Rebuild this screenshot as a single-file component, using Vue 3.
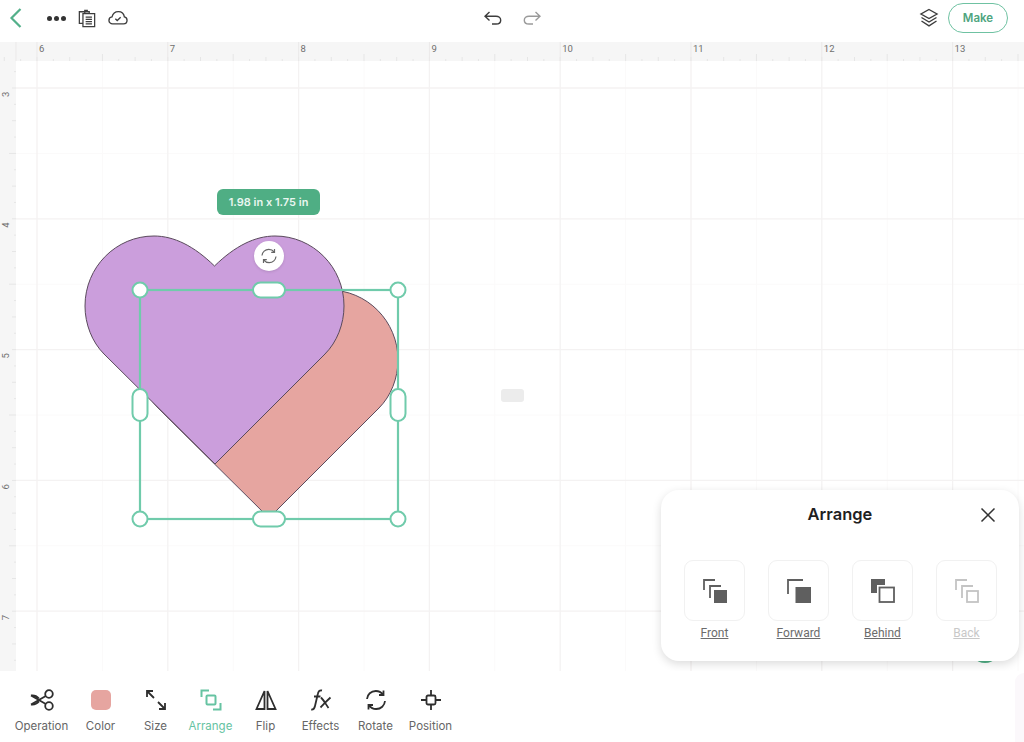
<script setup>
const xLabels = [6, 7, 8, 9, 10, 11, 12, 13]
const yLabels = [3, 4, 5, 6, 7]
const unit = 130.8
const xMajor = xLabels.map((n, i) => 37 + i * unit)
const yMajor = [0, 1, 2, 3, 4].map((i) => 27 + i * unit)
const xMinor = [-1, ...xLabels.map((n, i) => i)].map((i) => 37 + i * unit + unit / 2)
const yMinor = [-1, 0, 1, 2, 3, 4].map((i) => 27 + i * unit + unit / 2)

const xTicks = []
for (let i = -1; i < 8; i++) {
  for (let k = 0; k < 8; k++) {
    xTicks.push({ x: 37 + i * unit + (k * unit) / 8, h: k === 4 ? 7 : k % 2 === 0 ? 4 : 2 })
  }
}
const yTicks = []
for (let i = -1; i < 5; i++) {
  for (let k = 0; k < 8; k++) {
    yTicks.push({ y: 27 + i * unit + (k * unit) / 8, w: k === 4 ? 7 : k % 2 === 0 ? 4 : 2 })
  }
}

const heart = 'M214.5 266C235 246 255 236 275 236C313 236 344 267 344 306C344 324 337 342 325 354L215 464L104 354C92 342 85 324 85 306C85 267 116 236 154 236C174 236 194 246 214.5 266Z'

const arrangeOptions = [
  { label: 'Front', kind: 'front' },
  { label: 'Forward', kind: 'forward' },
  { label: 'Behind', kind: 'behind' },
  { label: 'Back', kind: 'back' }
]
</script>

<template>
  <div class="app">
    <header class="topbar">
      <div class="top-group left">
        <svg class="back" width="14" height="22" viewBox="0 0 14 22"><path d="M11.5 2L2.5 11l9 9" /></svg>
        <span class="dots"><i></i><i></i><i></i></span>
        <svg class="ic" width="18" height="19" viewBox="0 0 20 20">
          <path d="M5.5 15.5H1.5V2.5h11V4" />
          <path d="M5.5 4.5h13v14.5h-13z" />
          <path d="M8.5 8.5h7M8.5 11h7M8.5 13.5h7M8.5 16h7" />
          <path d="M7.5 4.5V1h3.5" />
        </svg>
        <svg class="ic" width="20" height="16" viewBox="0 0 21 16">
          <path d="M5 14.2H4.800C2.700 14.200 1 12.600 1 10.500C1 8.600 2.400 7.100 4.200 6.900C5 3.600 7.700 1.300 10.900 1.300C14.100 1.300 16.700 3.600 17.200 6.800C18.900 7.100 20 8.600 20 10.400C20 12.500 18.400 14.200 16.300 14.200Z" />
          <path d="M7.7 8.800l2 1.900 3.600-3.400" />
        </svg>
      </div>
      <div class="top-group center">
        <svg class="ic" width="18" height="14" viewBox="0 0 18 14"><path d="M5.5 1L1 5.2l4.5 4.2M1.5 5.2H12c2.700 0 4.700 1.700 4.700 4s-2 3.800-4.700 3.800H8" /></svg>
        <svg class="ic redo" width="18" height="14" viewBox="0 0 18 14"><path d="M12.5 1L17 5.2l-4.500 4.200M16.500 5.200H6c-2.700 0-4.700 1.700-4.700 4S3.300 13 6 13h4" /></svg>
      </div>
      <div class="top-group right">
        <svg class="ic layers" width="20" height="20" viewBox="0 0 20 20">
          <path d="M10 1.5l8 4.5-8 4.500-8-4.500z" />
          <path d="M2.5 9.5L10 14l7.500-4.500" />
          <path d="M2.5 13L10 17.800l7.500-4.800" />
        </svg>
        <button class="make">Make</button>
      </div>
    </header>

    <div class="ruler-top">
      <svg width="1024" height="19">
        <line v-for="t in xTicks" :key="t.x" :x1="t.x" :x2="t.x" :y1="19" :y2="19 - t.h" class="tick" />
        <line v-for="x in xMajor" :key="x" :x1="x" :x2="x" y1="0" y2="19" class="tick major" />
        <line x1="16" x2="16" y1="0" y2="19" class="tick major" />
        <text v-for="(n, i) in xLabels" :key="n" :x="xMajor[i] + 2" y="10" class="ruler-num">{{ n }}</text>
      </svg>
    </div>

    <div class="work">
      <div class="ruler-left">
        <svg width="16" height="610">
          <line v-for="t in yTicks" :key="t.y" :x1="16" :x2="16 - t.w" :y1="t.y" :y2="t.y" class="tick" />
          <text v-for="(n, i) in yLabels" :key="n" x="0" y="0" class="ruler-num" :transform="`translate(9 ${yMajor[i] + 9}) rotate(-90)`">{{ n }}</text>
        </svg>
      </div>

      <div class="canvas">
        <!-- svg uses page coordinates, shifted up and left by the rulers -->
        <svg class="stage" width="1008" height="610" viewBox="16 61 1008 610">
          <line v-for="x in xMinor" :key="'a' + x" :x1="x" :x2="x" y1="61" y2="671" class="grid-minor" />
          <line v-for="y in yMinor" :key="'b' + y" x1="16" x2="1024" :y1="y + 61" :y2="y + 61" class="grid-minor" />
          <line v-for="x in xMajor" :key="'c' + x" :x1="x" :x2="x" y1="61" y2="671" class="grid-major" />
          <line v-for="y in yMajor" :key="'d' + y" x1="16" x2="1024" :y1="y + 61" :y2="y + 61" class="grid-major" />

          <path :d="heart" transform="translate(54 54)" class="heart coral" />
          <path :d="heart" class="heart purple" />

          <rect x="140" y="290" width="258" height="229" class="sel-box" />
          <circle cx="140" cy="290" r="7.5" class="handle" />
          <circle cx="398" cy="290" r="7.5" class="handle" />
          <circle cx="140" cy="519" r="7.5" class="handle" />
          <circle cx="398" cy="519" r="7.5" class="handle" />
          <rect x="253" y="282.5" width="32" height="15" rx="7.5" class="handle" />
          <rect x="253" y="511.5" width="32" height="15" rx="7.5" class="handle" />
          <rect x="132.5" y="389" width="15" height="32" rx="7.5" class="handle" />
          <rect x="390.5" y="389" width="15" height="32" rx="7.5" class="handle" />
        </svg>

        <div class="size-tip">1.98 in x 1.75 in</div>

        <div class="rotate-btn">
          <svg width="18" height="18" viewBox="0 0 18 18">
            <path d="M2 8.5C2.300 5 5.200 2.300 8.800 2.300c2.200 0 4.100 1 5.300 2.600M14.500 2v3.300h-3.300" />
            <path d="M16 9.5c-.3 3.500-3.200 6.200-6.800 6.200-2.200 0-4.100-1-5.300-2.600M3.500 16v-3.300h3.300" />
          </svg>
        </div>

        <div class="ghost"></div>
        <div class="fab"></div>

        <section class="panel">
          <div class="panel-head">
            <h3>Arrange</h3>
            <svg class="close" width="16" height="16" viewBox="0 0 16 16"><path d="M1.5 1.5l13 13M14.500 1.500l-13 13" /></svg>
          </div>
          <div class="panel-row">
            <div v-for="o in arrangeOptions" :key="o.label" :class="['opt', { off: o.kind === 'back' }]">
              <div class="opt-box">
                <svg width="24" height="24" viewBox="0 0 24 24">
                  <template v-if="o.kind === 'front'">
                    <path d="M1 11V1h11" class="st" />
                    <path d="M7 19V7h11" class="st" />
                    <rect x="11" y="11" width="13" height="13" class="fl" />
                  </template>
                  <template v-else-if="o.kind === 'forward'">
                    <path d="M1 15V1h15" class="st" />
                    <rect x="8.5" y="8" width="15.5" height="16" class="fl" />
                  </template>
                  <template v-else-if="o.kind === 'behind'">
                    <path d="M0 0h14v6H6v8H0z" class="fl" />
                    <rect x="8.5" y="8.5" width="14.5" height="14.5" class="st" />
                  </template>
                  <template v-else>
                    <path d="M1 11V1h11" class="st" />
                    <path d="M7 19V7h11" class="st" />
                    <rect x="12" y="12" width="11" height="11" class="st" />
                  </template>
                </svg>
              </div>
              <span class="opt-label">{{ o.label }}</span>
            </div>
          </div>
        </section>
      </div>
    </div>

    <footer class="toolbar">
      <div class="tool first">
        <svg width="26" height="22" viewBox="0 0 26 22">
          <circle cx="20" cy="5" r="3.8" />
          <circle cx="20" cy="17" r="3.8" />
          <path d="M16.8 7L2 15.500M16.800 15L2 6.500M2 6.500c3-.5 6 .8 8 3M2 15.500c3 .5 6-.8 8-3" />
        </svg>
        <span>Operation</span>
      </div>
      <div class="tool">
        <i class="swatch"></i>
        <span>Color</span>
      </div>
      <div class="tool">
        <svg width="22" height="22" viewBox="0 0 22 22">
          <path d="M2 2l7 7M2 8V2h6" />
          <path d="M20 20l-7-7M20 14v6h-6" />
        </svg>
        <span>Size</span>
      </div>
      <div class="tool active">
        <svg width="22" height="22" viewBox="0 0 22 22">
          <path d="M1.5 8V1.500H9" />
          <rect x="6.5" y="6.5" width="9" height="9" rx="1" />
          <path d="M20.5 14v6.500H13" />
        </svg>
        <span>Arrange</span>
      </div>
      <div class="tool">
        <svg width="22" height="22" viewBox="0 0 22 22">
          <path d="M9.5 2L1.500 20h8z" />
          <path d="M12.5 2l8 18h-8z" />
        </svg>
        <span>Flip</span>
      </div>
      <div class="tool">
        <svg width="22" height="22" viewBox="0 0 22 22">
          <path d="M12 1.5C9.500 1 8.300 2.500 7.800 5L5 17c-.5 2.500-1.500 3.800-3.800 3.500M4 7.500h6.500" />
          <path d="M11 8.5c3 3 5 7 7.500 10.500M20.500 8.500c-3.500 3-6.500 6.500-10 10" />
        </svg>
        <span>Effects</span>
      </div>
      <div class="tool">
        <svg width="22" height="22" viewBox="0 0 22 22">
          <path d="M2 10C2.400 5.400 6 2 10.800 2c3 0 5.500 1.300 7 3.500M18.500 1.500v4.500H14" />
          <path d="M20 12c-.4 4.600-4 8-8.800 8-3 0-5.500-1.300-7-3.500M3.500 20.500V16H8" />
        </svg>
        <span>Rotate</span>
      </div>
      <div class="tool">
        <svg width="22" height="22" viewBox="0 0 22 22">
          <rect x="6.5" y="6.5" width="9" height="9" rx="1.5" />
          <path d="M11 1v5.500M11 15.500V21M1 11h5.500M15.500 11H21" />
        </svg>
        <span>Position</span>
      </div>
      <div class="corner-tint"></div>
    </footer>
  </div>
</template>

<style>
html,
body {
  margin: 0;
  background: #fff;
}
</style>

<style scoped>
.app {
  width: 1024px;
  height: 742px;
  display: flex;
  flex-direction: column;
  overflow: hidden;
  background: #fff;
  font-family: Inter, "Liberation Sans", sans-serif;
}

.topbar {
  height: 36px;
  padding-bottom: 6px;
  display: flex;
  align-items: center;
  flex-shrink: 0;
}

.top-group {
  display: flex;
  align-items: center;
  flex: 1 1 0;
}

.top-group.left {
  padding-left: 9px;
}

.top-group.center {
  justify-content: center;
  gap: 21px;
  flex: 0 0 auto;
  padding-left: 8px;
}

.top-group.right {
  justify-content: flex-end;
  padding-right: 16px;
}

.back {
  fill: none;
  stroke: #53b08a;
  stroke-width: 2.2;
  margin-right: 24px;
}

.dots {
  display: flex;
  gap: 2px;
  margin-right: 12px;
}

.dots i {
  width: 5px;
  height: 5px;
  border-radius: 50%;
  background: #333;
}

.ic {
  fill: none;
  stroke: #3d3d3d;
  stroke-width: 1.4;
}

.top-group.left .ic + .ic {
  margin-left: 12px;
}

.redo {
  stroke: #9a9a9a;
}

.top-group.right .ic {
  margin-right: 9px;
}

.make {
  width: 60px;
  height: 30px;
  border: 1.5px solid #6fc2a2;
  border-radius: 15px;
  background: #fff;
  color: #4fa580;
  font: 600 11.5px Inter, "Liberation Sans", sans-serif;
  padding: 0;
}

.ruler-top {
  height: 19px;
  flex-shrink: 0;
  background: #f6f6f6;
}

.ruler-top svg,
.ruler-left svg {
  display: block;
}

.tick {
  stroke: #e6e6e6;
  stroke-width: 1;
}

.tick.major {
  stroke: #ebe9e9;
}

.ruler-num {
  font-size: 9.5px;
  fill: #6f6f6f;
  font-family: Roboto, "Liberation Sans", sans-serif;
}

.work {
  height: 610px;
  display: flex;
  flex-shrink: 0;
}

.ruler-left {
  width: 16px;
  flex-shrink: 0;
  background: #f6f6f6;
}

.canvas {
  position: relative;
  flex: 1;
  overflow: hidden;
  background: #fff;
}

.stage {
  position: absolute;
  inset: 0;
}

.grid-major {
  stroke: #f4f2f2;
  stroke-width: 1.3;
}

.grid-minor {
  stroke: #fbfafa;
  stroke-width: 1;
}

.heart {
  stroke: #5a4a5c;
  stroke-width: 1;
}

.heart.coral {
  fill: #e6a5a0;
}

.heart.purple {
  fill: #cb9edc;
}

.sel-box {
  fill: none;
  stroke: #70cbab;
  stroke-width: 2.2;
}

.handle {
  fill: #fff;
  stroke: #70cbab;
  stroke-width: 2;
}

.size-tip {
  position: absolute;
  left: 201px;
  top: 128px;
  width: 103px;
  height: 26px;
  border-radius: 6px;
  background: #4fae84;
  color: #e9f6f0;
  font-size: 11px;
  font-weight: 600;
  line-height: 26px;
  text-align: center;
}

.rotate-btn {
  position: absolute;
  left: 238px;
  top: 180px;
  width: 30px;
  height: 30px;
  border-radius: 50%;
  background: #fff;
  display: flex;
  align-items: center;
  justify-content: center;
  box-shadow: 0 1px 3px rgba(0, 0, 0, 0.12);
}

.rotate-btn svg {
  fill: none;
  stroke: #666;
  stroke-width: 1.2;
}

.ghost {
  position: absolute;
  left: 485px;
  top: 328px;
  width: 23px;
  height: 13px;
  border-radius: 3px;
  background: #ececec;
}

.fab {
  position: absolute;
  left: 953px;
  top: 570px;
  width: 32px;
  height: 32px;
  border-radius: 50%;
  background: #4fae84;
}

.panel {
  position: absolute;
  left: 645px;
  top: 429px;
  width: 358px;
  height: 171px;
  border-radius: 18px;
  background: #fff;
  box-shadow: 0 3px 10px rgba(0, 0, 0, 0.14);
}

.panel-head {
  position: relative;
  height: 49px;
  display: flex;
  align-items: center;
  justify-content: center;
}

.panel-head h3 {
  margin: 0 0 2px;
  font-size: 16.5px;
  font-weight: 600;
  color: #1f1f1f;
}

.close {
  position: absolute;
  right: 23px;
  top: 17px;
  fill: none;
  stroke: #333;
  stroke-width: 1.5;
}

.panel-row {
  display: flex;
  gap: 23px;
  padding: 21px 0 0 23px;
}

.opt {
  width: 61px;
  display: flex;
  flex-direction: column;
  align-items: center;
}

.opt-box {
  width: 61px;
  height: 61px;
  box-sizing: border-box;
  border: 1px solid #f1f1f1;
  border-radius: 9px;
  display: flex;
  align-items: center;
  justify-content: center;
}

.st {
  fill: none;
  stroke: #5f5f5f;
  stroke-width: 1.8;
}

.fl {
  fill: #5f5f5f;
}

.opt.off .st {
  stroke: #c4c4c4;
}

.opt-label {
  margin-top: 5px;
  font-family: Roboto, "Liberation Sans", sans-serif;
  font-size: 12px;
  line-height: 14px;
  color: #6c6c6c;
  text-decoration: underline;
}

.opt.off .opt-label {
  color: #c8c8c8;
}

.toolbar {
  position: relative;
  flex: 1;
  display: flex;
  padding-left: 14px;
  background: #fff;
}

.corner-tint {
  position: absolute;
  right: 0;
  top: 2px;
  bottom: 0;
  width: 9px;
  border-top-left-radius: 14px;
  background: #fbf8fb;
}

.tool {
  width: 55px;
  display: flex;
  flex-direction: column;
  align-items: center;
  padding-top: 18px;
  font-size: 11.5px;
  color: #666;
  white-space: nowrap;
}

.tool.first {
  margin-right: 4px;
}

.tool svg {
  height: 22px;
  margin-bottom: 8px;
  fill: none;
  stroke: #2e2e2e;
  stroke-width: 1.8;
}

.tool span {
  line-height: 14px;
}

.tool.active {
  color: #66c3a2;
}

.tool.active svg {
  stroke: #66c3a2;
  stroke-width: 2;
}

.swatch {
  display: block;
  width: 20px;
  height: 20px;
  margin-top: 1px;
  margin-bottom: 9px;
  border-radius: 5px;
  background: #e6a5a0;
}
</style>
